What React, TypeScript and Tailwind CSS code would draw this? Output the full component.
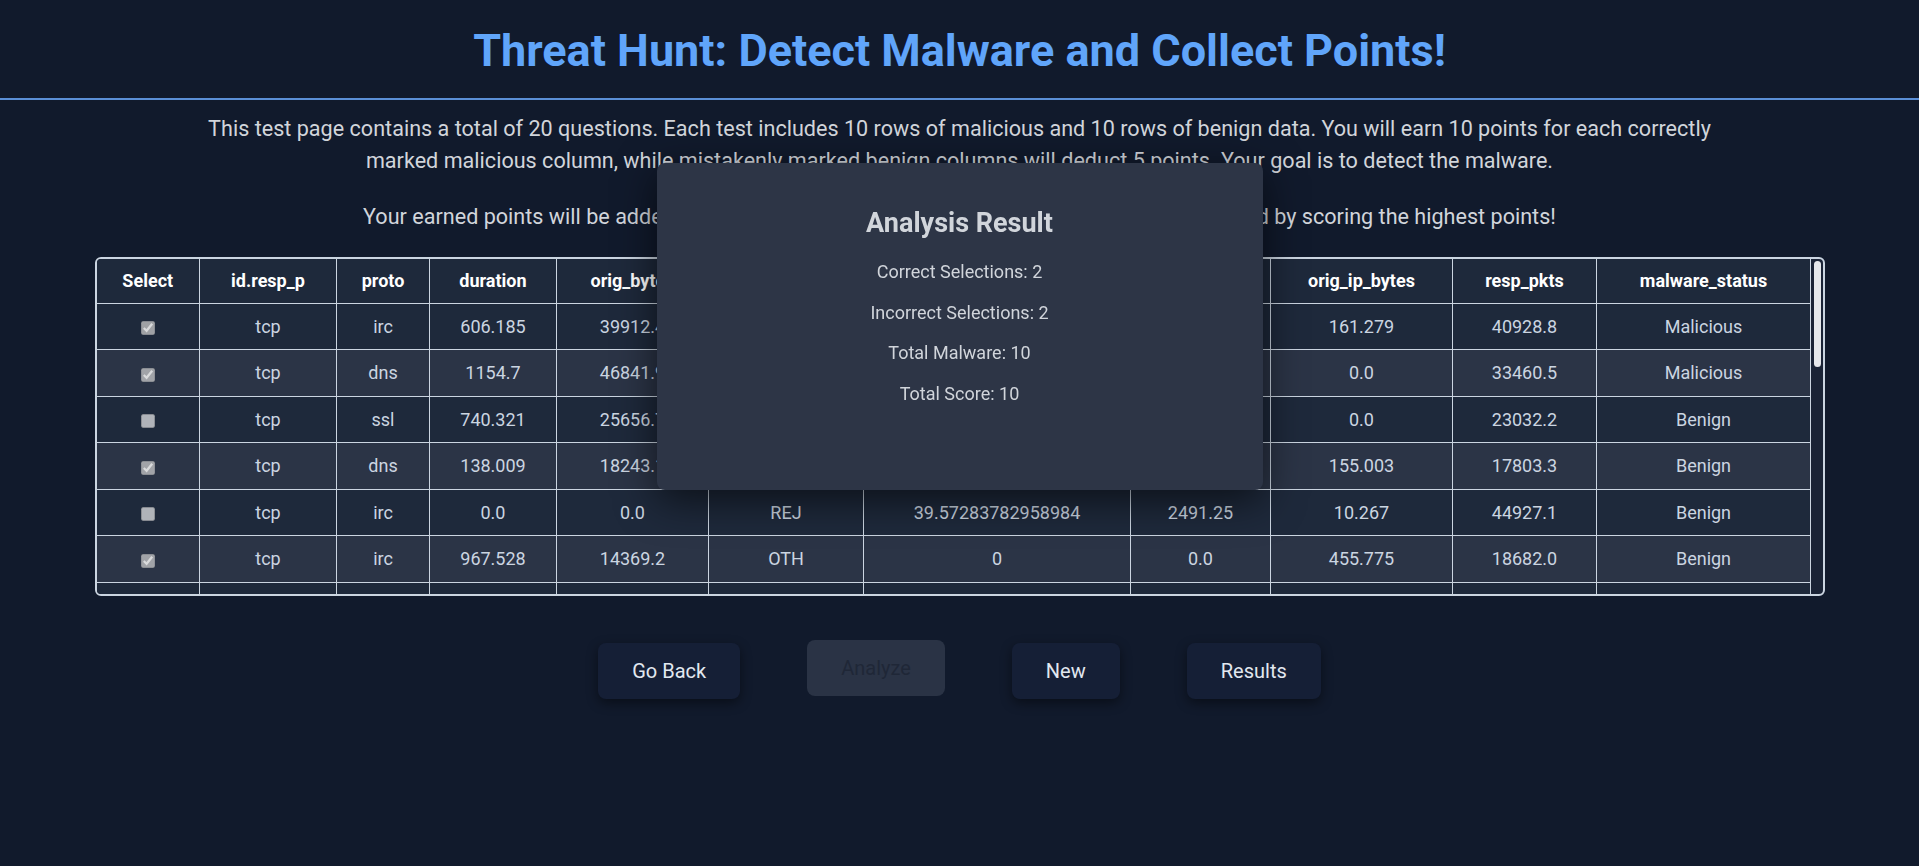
import React from "react";

type Row = {
  sel: boolean;
  c: string[];
};

const headers = [
  "Select",
  "id.resp_p",
  "proto",
  "duration",
  "orig_bytes",
  "conn_state",
  "missed_bytes",
  "orig_pkts",
  "orig_ip_bytes",
  "resp_pkts",
  "malware_status",
];

const widths = [103, 137, 93, 127, 152, 155, 267, 140, 182, 144, 214];

const rows: Row[] = [
  { sel: true, c: ["tcp", "irc", "606.185", "39912.4", "S0", "12.48211956024170", "1520.33", "161.279", "40928.8", "Malicious"] },
  { sel: true, c: ["tcp", "dns", "1154.7", "46841.9", "SF", "0", "833.12", "0.0", "33460.5", "Malicious"] },
  { sel: false, c: ["tcp", "ssl", "740.321", "25656.7", "RSTO", "7.214958190917969", "0.0", "0.0", "23032.2", "Benign"] },
  { sel: true, c: ["tcp", "dns", "138.009", "18243.1", "SH", "0", "3021.8", "155.003", "17803.3", "Benign"] },
  { sel: false, c: ["tcp", "irc", "0.0", "0.0", "REJ", "39.57283782958984", "2491.25", "10.267", "44927.1", "Benign"] },
  { sel: true, c: ["tcp", "irc", "967.528", "14369.2", "OTH", "0", "0.0", "455.775", "18682.0", "Benign"] },
  { sel: false, c: ["tcp", "http", "212.44", "8712.6", "SF", "0", "114.5", "98.112", "27741.9", "Malicious"] },
  { sel: false, c: ["udp", "dns", "0.0", "302.1", "S0", "0", "0.0", "0.0", "1204.3", "Benign"] },
  { sel: false, c: ["tcp", "ssl", "1501.2", "33018.4", "SF", "21.00412368774414", "612.7", "240.51", "39115.0", "Malicious"] },
  { sel: false, c: ["tcp", "irc", "84.337", "1293.8", "RSTR", "0", "0.0", "12.006", "9981.2", "Benign"] },
  { sel: false, c: ["tcp", "dns", "412.9", "22081.5", "SF", "0", "1840.0", "77.415", "30127.6", "Malicious"] },
  { sel: false, c: ["tcp", "http", "0.0", "0.0", "REJ", "0", "0.0", "0.0", "512.0", "Benign"] },
  { sel: false, c: ["tcp", "ssl", "889.61", "41277.3", "OTH", "3.918403148651123", "2201.4", "301.88", "42210.7", "Malicious"] },
  { sel: false, c: ["udp", "dns", "12.5", "640.2", "SF", "0", "0.0", "4.102", "2048.9", "Benign"] },
  { sel: false, c: ["tcp", "irc", "1320.04", "37744.0", "S1", "0", "952.6", "188.2", "36006.3", "Malicious"] },
  { sel: false, c: ["tcp", "http", "56.72", "4410.9", "SF", "0", "0.0", "20.554", "11872.4", "Benign"] },
  { sel: false, c: ["tcp", "dns", "703.18", "29361.1", "SF", "0", "1188.2", "129.6", "31459.8", "Malicious"] },
  { sel: false, c: ["tcp", "ssl", "0.0", "0.0", "S0", "0", "0.0", "0.0", "0.0", "Benign"] },
  { sel: false, c: ["tcp", "irc", "1088.9", "45120.6", "SF", "8.441205978393555", "2702.1", "377.09", "43388.1", "Malicious"] },
  { sel: false, c: ["tcp", "http", "301.27", "9982.4", "RSTO", "0", "0.0", "66.73", "15530.2", "Benign"] },
];

const btn =
  "mt-[3px] rounded-lg bg-[#151f36] px-[34px] py-4 text-[20px] leading-6 text-[#e2e8f0] shadow-[0_4px_12px_rgba(0,0,0,0.45)]";

export default function App() {
  return (
    <div className="min-h-screen w-full bg-[#111a2c] font-['Roboto',sans-serif] text-[#d1d5db]">
      <header className="h-[100px] border-b-2 border-[#5b8fd6] pt-[27px] text-center">
        <h1 className="text-[45px] font-bold leading-[48px] text-[#60a5fa]">
          Threat Hunt: Detect Malware and Collect Points!
        </h1>
      </header>

      <p className="mx-auto mt-[13px] w-[80%] text-center text-[21.6px] leading-[32px] text-[#d1d5db]">
        This test page contains a total of 20 questions. Each test includes 10 rows of malicious and 10 rows of
        benign data. You will earn 10 points for each correctly marked malicious column, while mistakenly marked
        benign columns will deduct 5 points. Your goal is to detect the malware.
      </p>
      <p className="mx-auto mt-[24px] w-[80%] text-center text-[21.6px] leading-[32px] text-[#d1d5db]">
        Your earned points will be added to the leaderboards, and you can climb to the top of the board by scoring
        the highest points!
      </p>

      <div className="relative mx-auto mt-[24px] h-[339px] w-[1730px] overflow-hidden rounded-md border-2 border-[#cbd5e1] bg-[#1a2336]">
        <table className="w-[1714px] table-fixed border-collapse text-center text-[18px]">
          <colgroup>
            {widths.map((w, i) => (
              <col key={i} style={{ width: w }} />
            ))}
          </colgroup>
          <thead>
            <tr className="bg-[#1e293b]">
              {headers.map((h, i) => (
                <th
                  key={h}
                  className={`h-[44px] border border-t-0 border-[#cbd5e1] px-2 font-bold text-white ${i === 0 ? "border-l-0" : ""}`}
                >
                  {h}
                </th>
              ))}
            </tr>
          </thead>
          <tbody>
            {rows.map((r, ri) => (
              <tr key={ri} className={ri % 2 === 0 ? "bg-[#1e293b]" : "bg-[#2b3446]"}>
                <td className="h-[46.5px] border border-l-0 border-[#cbd5e1] px-2">
                  <input
                    type="checkbox"
                    checked={r.sel}
                    disabled
                    readOnly
                    className="h-[14px] w-[14px] align-middle"
                  />
                </td>
                {r.c.map((v, ci) => (
                  <td key={ci} className="h-[46.5px] border border-[#cbd5e1] px-2 text-[#cbd5e1]">
                    {v}
                  </td>
                ))}
              </tr>
            ))}
          </tbody>
        </table>
        <div className="absolute right-[2px] top-[2px] h-[106px] w-[7px] rounded-full bg-[#e5e7eb]" />
      </div>

      <div className="mt-[44px] flex items-start justify-center gap-[67px]">
        <button className={btn}>Go Back</button>
        <button
          disabled
          className="rounded-lg bg-[#2a3345] px-[34px] py-4 text-[20px] leading-6 text-[#1f2737]"
        >
          Analyze
        </button>
        <button className={btn}>New</button>
        <button className={btn}>Results</button>
      </div>

      <div className="fixed left-1/2 top-[163px] flex h-[327px] w-[606px] -translate-x-1/2 flex-col items-center rounded-lg bg-[#2d3546] pt-[44px] shadow-[0_10px_40px_rgba(0,0,0,0.6)]">
        <h2 className="text-[27px] font-bold leading-8 text-[#d1d5db]">Analysis Result</h2>
        <div className="mt-[21px] flex flex-col items-center gap-[16.5px] text-[18px] leading-6 text-[#d1d5db]">
          <p>Correct Selections: 2</p>
          <p>Incorrect Selections: 2</p>
          <p>Total Malware: 10</p>
          <p>Total Score: 10</p>
        </div>
      </div>
    </div>
  );
}
